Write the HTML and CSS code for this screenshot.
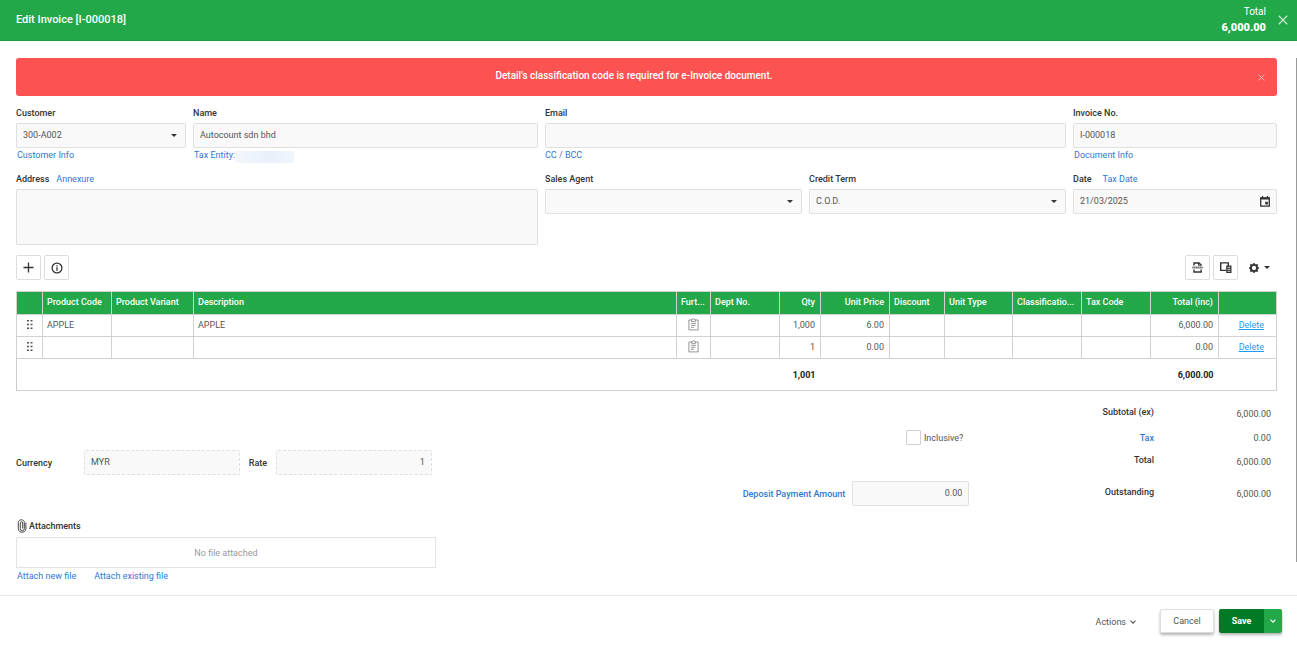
FILE: index.html
```html
<!DOCTYPE html>
<html lang="en">
<head>
<meta charset="utf-8">
<title>Edit Invoice [I-000018]</title>
<link rel="stylesheet" href="styles.css">
</head>
<body>
<svg class="sprite" aria-hidden="true">
  <symbol id="caret" viewBox="0 0 6 3"><path d="M0 0h6L3 3z" fill="currentColor"/></symbol>
  <symbol id="chevron" viewBox="0 0 8 8"><path d="M1.500 2.700l2.500 2.500L6.500 2.700" fill="none" stroke="currentColor" stroke-width="1.100"/></symbol>
  <symbol id="cross" viewBox="0 0 10 10"><path d="M.8.8l8.400 8.400M9.200.8L.8 9.200" fill="none" stroke="currentColor" stroke-width="1.300"/></symbol>
  <symbol id="grip" viewBox="0 0 6 9"><path d="M0 0h2v1.500H0zM3.500 0h2v1.500h-2zM0 3.700h2v1.500H0zM3.500 3.700h2v1.500h-2zM0 7.400h2v1.500H0zM3.500 7.400h2v1.500h-2z" fill="#555"/></symbol>
  <symbol id="note" viewBox="0 0 11 13"><path d="M.9 2h9.200v9.900H.9z" fill="#fff" stroke="#888" stroke-width=".9"/><path d="M3.500 1.700h1C4.500.9 4.900.4 5.500.4s1 .5 1 1.300h1v1.700h-4z" fill="#fff" stroke="#888" stroke-width=".8"/><path d="M3 5.300h5M3 7.300h4.500M3 9.300h3" stroke="#888" stroke-width=".9"/></symbol>
</svg>

<header class="titlebar">
  <h1 class="title">Edit Invoice [I-000018]</h1>
  <div class="headline"><span>Total</span><strong class="headline-value">6,000.00</strong></div>
  <button class="bare close" type="button" aria-label="Close"><svg width="10" height="10"><use href="#cross"/></svg></button>
</header>

<main class="content">
  <div class="scrollbar"></div>
  <div class="alert" role="alert">
    <span class="alert-text">Detail's classification code is required for e-Invoice document.</span>
    <button class="bare alert-close" type="button" aria-label="Dismiss"><svg width="7" height="7"><use href="#cross"/></svg></button>
  </div>

  <form class="fields">
    <div class="field">
      <label class="label" for="customer">Customer</label>
      <div class="control"><select class="input" id="customer"><option>300-A002</option></select><svg class="arrow" width="6" height="3"><use href="#caret"/></svg></div>
      <a class="link" href="#">Customer Info</a>
    </div>
    <div class="field">
      <label class="label" for="name">Name</label>
      <input class="input" id="name" value="Autocount sdn bhd">
      <div class="entity"><a class="link" href="#">Tax Entity:</a><span class="masked"></span></div>
    </div>
    <div class="field span2">
      <label class="label" for="email">Email</label>
      <input class="input" id="email" type="email">
      <a class="link flush" href="#">CC / BCC</a>
    </div>
    <div class="field">
      <label class="label" for="number">Invoice No.</label>
      <input class="input" id="number" value="I-000018">
      <a class="link" href="#">Document Info</a>
    </div>
    <div class="field span2">
      <div class="label-row"><label class="label" for="address">Address</label><a class="link" href="#">Annexure</a></div>
      <textarea class="input area" id="address"></textarea>
    </div>
    <div class="field">
      <label class="label" for="agent">Sales Agent</label>
      <div class="control"><select class="input" id="agent"><option></option></select><svg class="arrow" width="6" height="3"><use href="#caret"/></svg></div>
    </div>
    <div class="field">
      <label class="label" for="term">Credit Term</label>
      <div class="control"><select class="input" id="term"><option>C.O.D.</option></select><svg class="arrow" width="6" height="3"><use href="#caret"/></svg></div>
    </div>
    <div class="field">
      <div class="label-row wide"><label class="label" for="date">Date</label><a class="link" href="#">Tax Date</a></div>
      <div class="control"><input class="input" id="date" value="21/03/2025">
        <svg class="calendar" width="10" height="11" viewBox="0 0 10 11"><path d="M.7 2h8.600v8.200H.7z" fill="none" stroke="#333" stroke-width="1.300"/><path d="M.5 1.400h9v2h-9zM2 0h1.200v2H2zM6.800 0H8v2H6.800zM5.200 5.700h2.700v2.700H5.200z" fill="#333"/></svg>
      </div>
    </div>
  </form>

  <div class="toolbar">
    <button class="tool" type="button" aria-label="Add line"><svg width="11" height="11" viewBox="0 0 11 11"><path d="M5.500.5v10M.5 5.500h10" stroke="#333" stroke-width="1.300"/></svg></button>
    <button class="tool" type="button" aria-label="Information"><svg width="12" height="12" viewBox="0 0 12 12"><circle cx="6" cy="6" r="4.900" fill="none" stroke="#333" stroke-width="1.300"/><path d="M6 5.300v3.500M6 3.200v1.200" stroke="#333" stroke-width="1.300"/></svg></button>
    <button class="tool push" type="button" aria-label="Scan barcode"><svg width="11" height="11" viewBox="0 0 11 11"><path d="M2 3.600V1h5l2.200 2v.6M2 7.500V10h7.200V7.500" fill="none" stroke="#333" stroke-width="1.400"/><path d="M6.500.8v2.400H9" fill="none" stroke="#333" stroke-width="1"/><path d="M.3 5.500h10.400" stroke="#666" stroke-width="2" stroke-dasharray="1.400 .4"/></svg></button>
    <button class="tool" type="button" aria-label="Copy from document"><svg width="12" height="11" viewBox="0 0 12 11"><path d="M6 8.400H.7V.9h7.600V4" fill="none" stroke="#333" stroke-width="1.400"/><path d="M6.200 3.500h5.300V11H6.200z" fill="#333"/><path d="M7.500 5.300h2.800M7.500 7.300h2.800M7.500 9.300h2.800" stroke="#fff" stroke-width=".8"/></svg></button>
    <button class="bare settings" type="button" aria-label="Settings"><svg width="10" height="10" viewBox="0 0 10 10"><circle cx="5" cy="5" r="3.100" fill="none" stroke="#333" stroke-width="1.900"/><path d="M5 0v1.700M5 8.300V10M0 5h1.700M8.300 5H10M1.400 1.400l1.200 1.200M7.400 7.400l1.200 1.200M8.600 1.400L7.400 2.600M2.600 7.400L1.400 8.600" stroke="#333" stroke-width="1.500"/></svg><svg width="6" height="3"><use href="#caret"/></svg></button>
  </div>

  <table class="lines">
    <colgroup><col class="c-grip"><col class="c-md"><col class="c-lg"><col><col class="c-note"><col class="c-md"><col class="c-qty"><col class="c-md"><col class="c-sm"><col class="c-unit"><col class="c-md"><col class="c-md"><col class="c-unit"><col class="c-act"></colgroup>
    <thead><tr><th></th><th>Product Code</th><th>Product Variant</th><th>Description</th><th>Furt...</th><th>Dept No.</th><th class="num">Qty</th><th class="num">Unit Price</th><th>Discount</th><th>Unit Type</th><th>Classificatio...</th><th>Tax Code</th><th class="num">Total (inc)</th><th></th></tr></thead>
    <tbody>
      <tr><td class="mid"><svg width="6" height="9"><use href="#grip"/></svg></td><td>APPLE</td><td></td><td>APPLE</td><td class="mid"><svg width="11" height="13"><use href="#note"/></svg></td><td></td><td class="num">1,000</td><td class="num">6.00</td><td></td><td></td><td></td><td></td><td class="num">6,000.00</td><td class="act"><a class="delete" href="#">Delete</a></td></tr>
      <tr><td class="mid"><svg width="6" height="9"><use href="#grip"/></svg></td><td></td><td></td><td></td><td class="mid"><svg width="11" height="13"><use href="#note"/></svg></td><td></td><td class="num">1</td><td class="num">0.00</td><td></td><td></td><td></td><td></td><td class="num">0.00</td><td class="act"><a class="delete" href="#">Delete</a></td></tr>
    </tbody>
    <tfoot><tr><td colspan="6"></td><td class="num">1,001</td><td colspan="5"></td><td class="num">6,000.00</td><td></td></tr></tfoot>
  </table>

  <section class="summary">
    <div class="left">
      <div class="currency">
        <label class="label currency-label" for="currency">Currency</label><input class="input dashed" id="currency" value="MYR" readonly>
        <label class="label" for="rate">Rate</label><input class="input dashed num" id="rate" value="1" readonly>
      </div>
      <h2 class="attach-title"><svg width="10" height="14" viewBox="0 0 10 14"><path d="M7.300 3.500v6.300a2 2 0 0 1-4 0V4a1 1 0 0 1 2.400 0v5.500M7.300 3.500C7.300-.1 1.300-.1 1.300 3.500v6.300c0 4.600 7.600 4.600 7.600 0V3.500" fill="none" stroke="#444" stroke-width="1"/></svg>Attachments</h2>
      <div class="dropzone">No file attached</div>
      <div class="attach-links"><a class="link" href="#">Attach new file</a><a class="link" href="#">Attach existing file</a></div>
    </div>
    <div class="middle">
      <label class="inclusive"><input class="check" type="checkbox">Inclusive?</label>
      <div class="deposit"><a class="link strong" href="#">Deposit Payment Amount</a><input class="input num deposit-input" aria-label="Deposit Payment Amount" value="0.00"></div>
    </div>
    <dl class="totals">
      <dt>Subtotal (ex)</dt><dd>6,000.00</dd>
      <dt class="level"><a class="link strong" href="#">Tax</a></dt><dd>0.00</dd>
      <dt>Total</dt><dd>6,000.00</dd>
      <dt class="last">Outstanding</dt><dd class="last">6,000.00</dd>
    </dl>
  </section>
</main>

<footer class="actions">
  <button class="bare menu" type="button">Actions<svg width="8" height="8"><use href="#chevron"/></svg></button>
  <button class="cancel" type="button">Cancel</button>
  <div class="split"><button class="save" type="button">Save</button><button class="more" type="button" aria-label="More save options"><svg width="8" height="8"><use href="#chevron"/></svg></button></div>
</footer>
</body>
</html>
```
FILE: styles.css
```css
* { box-sizing: border-box; }
body { margin: 0; min-height: 100vh; display: flex; flex-direction: column; background: #fff; color: #555; font: 9px/12px Roboto, "Liberation Sans", sans-serif; }
button, input, select, textarea { font: inherit; color: inherit; margin: 0; }
button { cursor: pointer; }
svg { display: block; flex: none; }
.sprite { position: absolute; width: 0; height: 0; }
.bare { border: 0; padding: 0; background: none; display: flex; align-items: center; }
.num { text-align: right; }

.titlebar { display: flex; align-items: center; height: 41px; padding: 0 9px 0 16px; background: #23a849; border-bottom: 1px solid #1c9c40; color: #fff; }
.title { margin: 0; font-size: 11px; line-height: 16px; font-weight: 500; }
.headline { margin-left: auto; display: flex; flex-direction: column; text-align: right; font-size: 10px; line-height: 16px; }
.headline-value { font-size: 11px; font-weight: 900; }
.close { margin-left: 12px; color: #c5e8cf; }

.content { position: relative; flex: 1; padding: 17px 20px 8px 16px; }
.scrollbar { position: absolute; top: 17px; right: 0; bottom: 33px; width: 1px; background: #999; }
.alert { display: flex; align-items: center; height: 38px; padding: 0 12px 0 0; border-radius: 3px; background: #fc5252; color: #fff; font-size: 10px; font-weight: 500; }
.alert-text { flex: 1; text-align: center; padding: 0 6px 2px 0; }
.alert-close { color: #ffc4c4; }

.fields { display: grid; grid-template-columns: 170fr 345fr 257fr 257fr 204fr; column-gap: 7px; row-gap: 12px; padding-top: 11px; }
.field { min-width: 0; display: flex; flex-direction: column; align-items: stretch; }
.span2 { grid-column: span 2; }
.label { color: #333; font-weight: 500; line-height: 12px; }
.field .label { margin-bottom: 4px; }
.label-row { display: flex; gap: 7px; }
.label-row.wide { gap: 11px; }
.link { color: #2f78d0; text-decoration: none; }
.field > .link, .entity { margin: 1px 0 0 1px; }
.field > .flush { margin-left: 0; }
.entity { display: flex; gap: 1px; height: 12px; }
.masked { width: 58px; height: 12px; margin-top: 2px; background: linear-gradient(90deg, #f3f7fd, #e8f0fa 60%, #f1f6fc); border-radius: 1px; }
.input { display: block; width: 100%; min-width: 0; height: 25px; padding: 0 6px 1px; border: 1px solid #e0e0e0; border-radius: 2px; background: #f9f9f9; outline: 0; appearance: none; color: #555; }
.area { height: 56px; resize: none; }
.control { position: relative; }
.arrow { position: absolute; right: 9px; top: 11px; color: #333; pointer-events: none; }
.calendar { position: absolute; right: 7px; top: 7px; }

.toolbar { display: flex; gap: 3px; margin: 10px 0 11px; }
.tool { display: flex; align-items: center; justify-content: center; width: 25px; height: 25px; padding: 0; border: 1px solid #ddd; border-radius: 2px; background: #fff; }
.push { margin-left: auto; }
.settings { gap: 5px; padding: 0 7px 0 8px; color: #333; }

.lines { width: 100%; table-layout: fixed; border-collapse: collapse; border: 1px solid #ccc; }
.c-grip { width: 26px; } .c-md { width: 69px; } .c-lg { width: 82px; } .c-note { width: 34px; } .c-qty { width: 41px; } .c-sm { width: 55px; } .c-unit { width: 68px; } .c-act { width: 58px; }
.lines th, .lines td { height: 22px; padding: 0 4px 2px; border: 1px solid #d2d2d2; text-align: left; white-space: nowrap; }
.lines th { height: 23px; padding-bottom: 3px; background: #23a849; color: #fff; font-weight: 500; }
.lines .num { text-align: right; padding-right: 5px; }
.lines .mid svg { margin: 0 auto; }
.lines .act { text-align: right; padding-right: 12px; }
.delete { color: #1d9bf0; }
.lines tfoot td { height: 32px; padding-bottom: 0; border-width: 1px 0; color: #222; font-weight: 700; }

.summary { display: flex; align-items: flex-start; padding-top: 11px; }
.left { width: 33.3%; }
.currency { display: flex; align-items: center; padding: 48px 4px 0 0; gap: 9px; }
.currency-label { width: 59px; flex: none; }
.dashed { flex: 1; border-style: dashed; }
.attach-title { display: flex; align-items: center; gap: 2px; margin: 44px 0 4px 1px; color: #333; font-size: 9px; line-height: 14px; font-weight: 500; }
.dropzone { display: flex; align-items: center; justify-content: center; height: 31px; border: 1px solid #e3e3e3; color: #999; }
.attach-links { display: flex; gap: 18px; padding: 2px 0 0 1px; }
.middle { flex: 1; display: flex; flex-direction: column; align-items: flex-end; padding-top: 28px; }
.inclusive { display: flex; align-items: center; gap: 3px; padding-right: 6px; height: 15px; }
.check { appearance: none; width: 15px; height: 15px; border: 1px solid #d0d0d0; border-radius: 1px; background: #fff; }
.deposit { display: flex; align-items: center; gap: 7px; margin-top: 36px; }
.strong { font-weight: 500; }
.deposit-input { width: 117px; }
.totals { width: 24.4%; display: grid; grid-template-columns: 1fr 117px; padding-right: 6px; margin: 0; text-align: right; line-height: 24px; }
.totals dt { color: #333; font-weight: 500; line-height: 20px; }
.totals .level { line-height: 24px; }
.totals dd { margin: 0; }
.totals .last { margin-top: 8px; }

.actions { display: flex; align-items: flex-start; justify-content: flex-end; height: 54px; padding: 13px 15px 0; border-top: 1px solid #e8e8e8; }
.menu { height: 25px; gap: 3px; margin-right: 23px; }
.cancel { width: 54px; height: 24px; padding: 0; border: 1px solid #ddd; border-radius: 2px; background: #fff; box-shadow: 0 2px 3px rgba(0, 0, 0, .3); }
.split { display: flex; height: 24px; margin-left: 5px; border-radius: 2px; overflow: hidden; color: #fff; box-shadow: 0 2px 3px rgba(0, 0, 0, .3); }
.save { width: 45px; padding: 0; border: 0; background: #007a24; font-weight: 700; }
.more { display: flex; align-items: center; justify-content: center; width: 18px; padding: 0; border: 0; background: #23a849; }
```
